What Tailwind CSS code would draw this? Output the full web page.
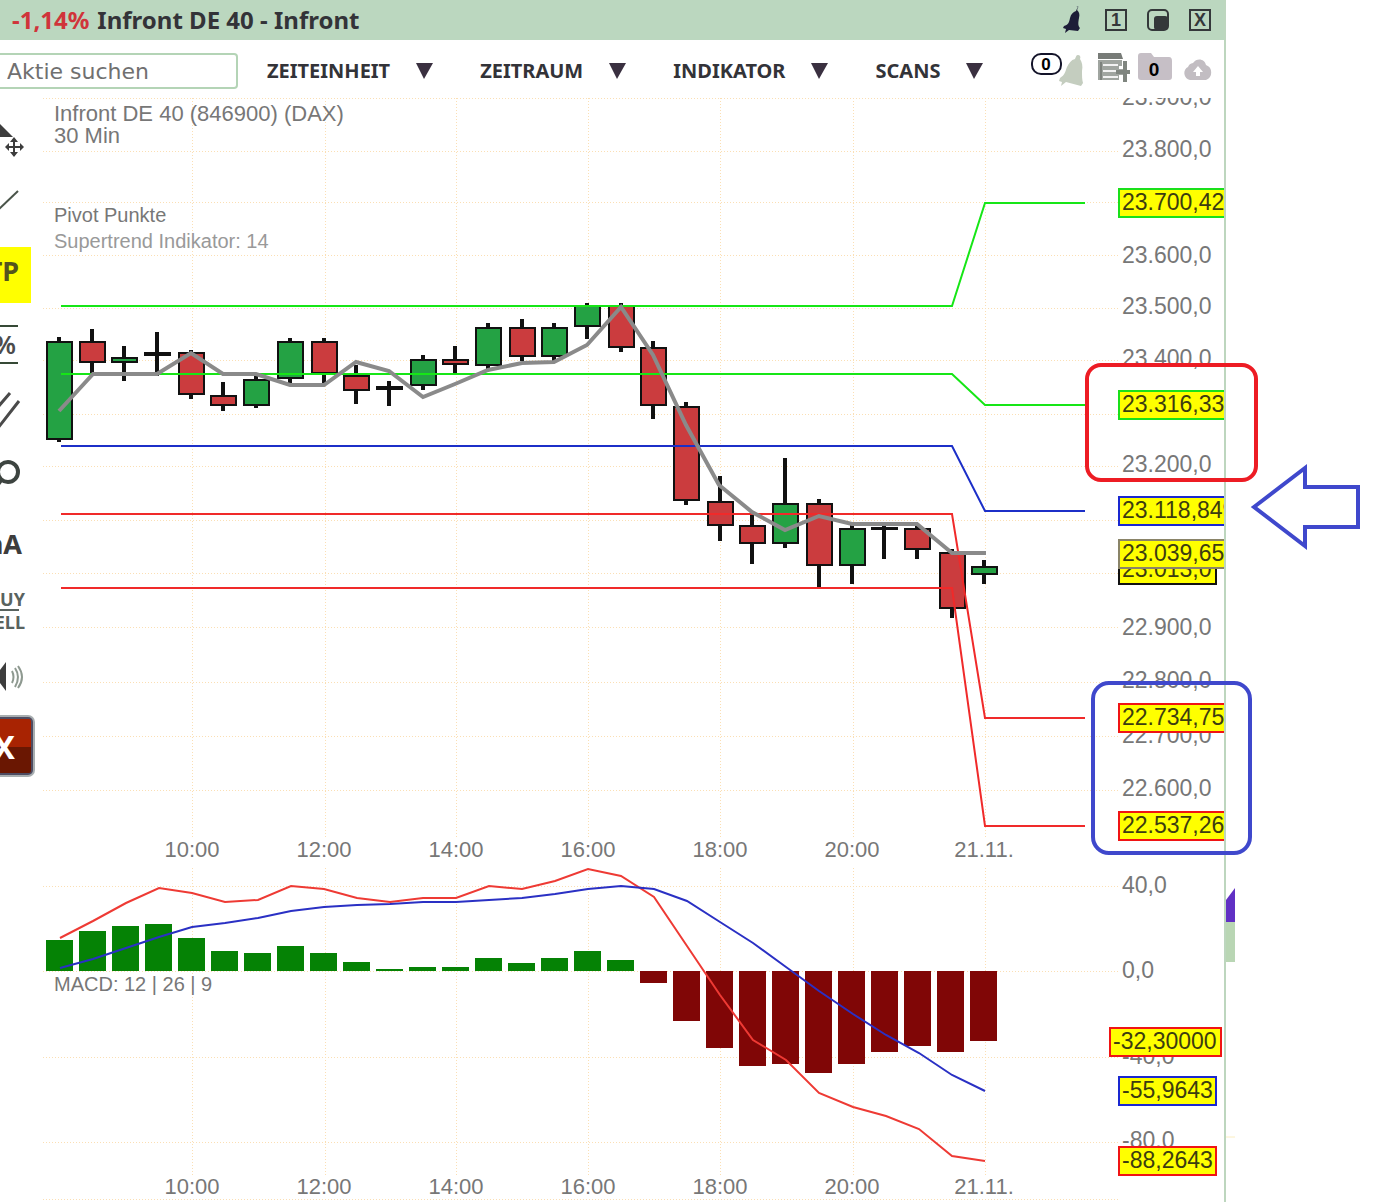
<!DOCTYPE html>
<html lang="de">
<head>
  <meta charset="UTF-8" />
  <meta name="viewport" content="width=device-width, initial-scale=1.0" />
  <title>Infront DE 40 - Infront</title>
  <script src="https://cdn.jsdelivr.net/npm/@tailwindcss/browser@4"></script>
</head>
<body class="bg-white font-['Noto_Sans',sans-serif] text-[#333338]">
  <div class="relative flex overflow-hidden">
    <!-- Chart window -->
    <main class="min-w-0 flex-1 border-r-2 border-[#bdd6be]">
      <!-- Title bar -->
      <header class="flex h-10 items-center bg-[#bbd7bf] pl-3 pr-[13px]">
        <h1 class="flex gap-2 text-2xl font-bold"><span class="text-[#d0343a]">-1,14%</span> Infront DE 40 - Infront</h1>
        <div class="ml-auto flex items-center gap-5 text-[#34383a]">
          <button type="button" aria-label="Alarm">
            <svg class="h-7 w-[22px]" viewBox="0 0 22 28"><path d="M16 1c-2 0-2 2-3 4-3 1-5 3-6 7-1 5-2 7-6 8l-1 2 3 1-1 4 4-3 9 1 2-3c-2-2-2-5-1-10 1-4 0-6-2-8 1-1 1-4-2-4z" fill="#1d1d38" /></svg>
          </button>
          <button type="button" class="size-[22px] border-2 border-[#34383a] font-['Liberation_Sans',sans-serif] text-lg leading-[18px] font-bold">1</button>
          <button type="button" aria-label="Verkleinern">
            <svg class="size-[22px]" viewBox="0 0 22 22"><rect x="1" y="1" width="20" height="20" rx="4" fill="none" stroke="#34383a" stroke-width="2" /><rect x="7" y="7" width="14" height="14" rx="3" fill="#34383a" /></svg>
          </button>
          <button type="button" class="size-[22px] border-2 border-[#34383a] font-['Liberation_Sans',sans-serif] text-lg leading-[18px] font-bold">X</button>
        </div>
      </header>

      <!-- Toolbar -->
      <div class="flex h-[58px] items-center pt-1 pr-[11px]">
        <label for="search" class="sr-only">Aktie suchen</label>
        <input type="search" id="search" placeholder="Aktie suchen"
          class="h-9 w-[238px] rounded-r-sm border-2 border-l-0 border-[#b4d4b6] pl-[7px] font-['DejaVu_Sans',sans-serif] text-[22px] placeholder:text-[#707070]">
        <nav class="ml-[29px] flex gap-[47px] text-xl font-bold">
          <button type="button" class="flex items-center gap-[26px]">ZEITEINHEIT
            <svg class="h-4 w-[17px]" viewBox="0 0 17 16"><path d="M0 0h17L8 16z" fill="#3a3040" /></svg>
          </button>
          <button type="button" class="flex items-center gap-[26px]">ZEITRAUM
            <svg class="h-4 w-[17px]" viewBox="0 0 17 16"><path d="M0 0h17L8 16z" fill="#3a3040" /></svg>
          </button>
          <button type="button" class="flex items-center gap-[26px]">INDIKATOR
            <svg class="h-4 w-[17px]" viewBox="0 0 17 16"><path d="M0 0h17L8 16z" fill="#3a3040" /></svg>
          </button>
          <button type="button" class="flex items-center gap-[26px]">SCANS
            <svg class="h-4 w-[17px]" viewBox="0 0 17 16"><path d="M0 0h17L8 16z" fill="#3a3040" /></svg>
          </button>
        </nav>
        <div class="ml-auto flex items-center gap-2.5 text-black">
          <button type="button" aria-label="Alarme">
            <svg class="h-9 w-[58px]" viewBox="1030 53 58 36" font-family="Liberation Sans, sans-serif">
              <path d="M1078 55c-2 0-2 2-3 4-4 1-6 4-8 8-2 5-2 8-7 11l-1 3 3 1-1 4 5-4 15 4 2-3c-1-3-1-7-1-12 1-5 0-9-2-12 1-2 0-4-2-4z" fill="#c4cdbf" />
              <rect x="1032" y="54" width="29" height="20" rx="9" fill="#fff" stroke="#14142a" stroke-width="2" />
              <text x="1046" y="70" text-anchor="middle" font-size="17" font-weight="bold">0</text>
            </svg>
          </button>
          <button type="button" aria-label="Liste hinzufügen">
            <svg class="h-9 w-[30px] overflow-visible" viewBox="1098 53 30 36">
              <path d="M1098 53h23l2 6h-25z" fill="#777b77" />
              <path d="M1098 60h24v6h-3v3h4v6h-4v5h-21z" fill="#a0a5a0" />
              <path d="M1103 65h15M1103 71h14M1103 77h15" stroke="#f2f2f2" stroke-width="2" />
              <path d="M1101 62v18" stroke="#7d827d" stroke-width="2" />
              <path d="M1125 61v21M1116 72h14" stroke="#7f857f" stroke-width="4" />
            </svg>
          </button>
          <button type="button" aria-label="Ordner">
            <svg class="h-9 w-9" viewBox="1138 53 36 36" font-family="Liberation Sans, sans-serif">
              <path d="M1138 56q0-3 3-3h10l3 4h15q3 0 3 4v16q0 3-3 3h-28q-3 0-3-3z" fill="#c6bfc6" />
              <text x="1154" y="76" text-anchor="middle" font-size="19" font-weight="bold">0</text>
            </svg>
          </button>
          <button type="button" aria-label="Hochladen">
            <svg class="h-9 w-[29px]" viewBox="1184 53 29 36">
              <path d="M1190 80a7 7 0 0 1-2-13 6 6 0 0 1 5-4c4-6 12-4 13 2a8 8 0 0 1 0 15z" fill="#c2bdc2" />
              <path d="M1198 66l5 6h-3v4h-4v-4h-3z" fill="#fff" />
            </svg>
          </button>
        </div>
      </div>

      <div class="flex">
        <!-- Drawing tools, cut off by the window's left edge -->
        <aside class="flex w-[43px] shrink-0 flex-col items-start fill-[#3d3d3d] font-bold">
          <button type="button" aria-label="Verschieben">
            <svg class="h-[72px] w-[43px]" viewBox="0 98 43 72">
              <path d="M0 124l13 13H0z" />
              <path d="M14 139v17M6 147h17" stroke="#3d3d3d" stroke-width="2" />
              <path d="M14 137l4 5h-8zM14 157l4-5h-8zM5 147l4-4v8zM24 147l-4-4v8z" />
            </svg>
          </button>
          <button type="button" aria-label="Linie">
            <svg class="h-[77px] w-[43px]" viewBox="0 170 43 77"><path d="M-2 210l20-19" stroke="#4a544a" stroke-width="2" /></svg>
          </button>
          <button type="button" class="bg-[#ffff00]">
            <svg class="h-14 w-[31px]" viewBox="0 247 31 56"><text x="19" y="281" text-anchor="end" font-size="27" fill="#54541e">TP</text></svg>
          </button>
          <button type="button">
            <svg class="h-[72px] w-[43px]" viewBox="0 303 43 72">
              <path d="M0 326h18M0 363h18" stroke="#364a36" stroke-width="2" />
              <text x="16" y="354" text-anchor="end" font-size="26" font-weight="600" fill="#4c4c4c">%</text>
            </svg>
          </button>
          <button type="button" aria-label="Kanal">
            <svg class="h-[70px] w-[43px]" viewBox="0 375 43 70"><path d="M-2 407l12-14M-2 428l21-27" stroke="#4a4a4a" stroke-width="3" /></svg>
          </button>
          <button type="button" aria-label="Lupe">
            <svg class="h-[65px] w-[43px]" viewBox="0 445 43 65"><circle cx="8" cy="472" r="10" fill="none" stroke="#3d4440" stroke-width="4" /><path d="M2 479l-6 8" stroke="#3d4440" stroke-width="4" /></svg>
          </button>
          <button type="button">
            <svg class="h-[70px] w-[43px]" viewBox="0 510 43 70"><text x="22" y="554" text-anchor="end" font-size="27">aA</text></svg>
          </button>
          <button type="button">
            <svg class="h-[60px] w-[43px]" viewBox="0 580 43 60" fill="#59635f" font-size="18">
              <text x="25" y="606" text-anchor="end">BUY</text>
              <path d="M0 610h19" stroke="#59635f" stroke-width="2" />
              <text x="25" y="629" text-anchor="end">SELL</text>
            </svg>
          </button>
          <button type="button" aria-label="Ton">
            <svg class="h-[70px] w-[43px]" viewBox="0 640 43 70">
              <path d="M0 670l6-8v29l-6-8z" />
              <path d="M12 671q3 6 0 12M15 668q6 9 0 19M18 666q8 11 0 22" fill="none" stroke="#8e9990" stroke-width="2" />
            </svg>
          </button>
          <button type="button">
            <svg class="h-[76px] w-[43px]" viewBox="0 710 43 76">
              <rect x="-12" y="715" width="47" height="62" rx="7" fill="#a8aeb0" />
              <rect x="-12" y="717" width="45" height="58" rx="5" fill="#4e4c62" />
              <path d="M0 719h29q2 0 2 3v25H0z" fill="#a82302" />
              <path d="M0 747h31v23q0 3-2 3H0z" fill="#6a1702" />
              <text x="15" y="759" text-anchor="end" font-size="32" fill="#fff">X</text>
            </svg>
          </button>
        </aside>

        <!-- Chart -->
        <svg id="chart" class="min-w-0 flex-1" viewBox="43 98 1181 1104" font-family="Liberation Sans, sans-serif" fill="none">
          <g id="grid" stroke="#fbdfb4" stroke-dasharray="1 2"></g>
          <g font-size="22" fill="#777">
            <text x="54" y="121">Infront DE 40 (846900) (DAX)</text>
            <text x="54" y="143">30 Min</text>
          </g>
          <g font-size="20" fill="#777">
            <text x="54" y="222">Pivot Punkte</text>
            <text x="54" y="248" fill="#999">Supertrend Indikator: 14</text>
          </g>
          <g id="candles" stroke="#111" stroke-width="3"></g>
          <g stroke-width="2">
            <path d="M61 306H952L985 203H1085M61 374H952L985 405H1085" stroke="#16e616" />
            <path d="M61 446H952L985 511H1085" stroke="#1c2fc8" />
            <path d="M61 514H952L985 718H1085M61 588H952L985 826H1085" stroke="#f02a2a" />
          </g>
          <polyline stroke="#8a8a8a" stroke-width="4" points="59,411 93,374 124,374 157,374 191,353 223,374 256,374 290,385 324,385 356,362 389,371 423,397 455,384 488,370 522,363 554,362 587,345 621,307 653,355 686,425 719,485 752,512 785,530 819,516 852,524 917,524 952,553 986,553" />
          <g id="bars"></g>
          <text x="54" y="991" font-size="20" fill="#777">MACD: 12 | 26 | 9</text>
          <polyline stroke="#ee3a34" stroke-width="2" points="60,938 93,921 126,903 159,888 192,893 225,902 258,900 291,886 324,889 357,898 390,902 423,898 456,898 489,886 522,889 555,881 588,869 621,876 654,897 687,946 720,995 753,1040 786,1060 819,1093 853,1107 886,1116 919,1129 952,1156 985,1161" />
          <polyline stroke="#2a30c4" stroke-width="2" points="60,968 93,959 126,948 159,937 192,927 225,923 258,918 291,911 324,907 357,905 390,904 423,902 456,902 489,900 522,898 555,894 588,889 621,886 654,889 687,901 720,922 753,943 786,967 819,991 853,1014 886,1035 919,1053 952,1075 985,1091" />
          <g id="labels" fill="#777"></g>
          <g id="tags" font-size="23"></g>
        </svg>
      </div>
    </main>

    <div class="w-[162px] shrink-0"></div>

    <!-- Markers drawn over the window -->
    <svg class="pointer-events-none absolute inset-0 w-full" viewBox="0 0 1388 1202" fill="none" stroke-width="4">
      <path d="M1226 900l9-12v34h-9z" fill="#6130c4" />
      <path d="M1226 922h9v40h-9z" fill="#b9d6b4" />
      <path d="M1226 1137h9" stroke="#fbeec0" stroke-width="1" />
      <rect x="1087" y="365" width="169" height="115" rx="14" stroke="#ed1c24" />
      <rect x="1093" y="683" width="157" height="170" rx="16" stroke="#3f48cc" />
      <path d="M1254 507l51-39v19h53v40h-53v19z" stroke="#3f48cc" />
    </svg>
  </div>

  <script>
    const NS = 'http://www.w3.org/2000/svg';

    function add(parent, tag, attrs, text) {
      const el = document.createElementNS(NS, tag);
      for (const key in attrs) el.setAttribute(key, attrs[key]);
      if (text) el.textContent = text;
      document.getElementById(parent).appendChild(el);
    }

    // Grid
    [98, 151, 202, 255, 308, 360, 414, 466, 520, 573, 627, 682, 736, 790, 886, 971, 1057, 1142, 1199].forEach(y => {
      add('grid', 'path', { d: `M43 ${y + 0.5}H1120` });
    });
    [192, 325, 456, 588, 720, 853, 985].forEach(x => {
      add('grid', 'path', { d: `M${x + 0.5} 98V837M${x + 0.5} 868V1175` });
    });

    // x, wick top, body top, body bottom, wick bottom, direction
    const GREEN = '#24a244', RED = '#cb3c3e', FLAT = '#111';
    [
      [59, 337, 341, 440, 442, GREEN], [92, 329, 341, 363, 375, RED], [124, 346, 357, 363, 381, GREEN],
      [157, 332, 352, 356, 376, FLAT], [191, 350, 352, 395, 399, RED], [223, 382, 395, 406, 411, RED],
      [256, 375, 379, 406, 408, GREEN], [290, 338, 341, 379, 384, GREEN], [324, 338, 341, 374, 384, RED],
      [356, 365, 375, 391, 404, RED], [389, 381, 386, 390, 406, FLAT], [423, 355, 359, 386, 390, GREEN],
      [455, 346, 359, 365, 373, RED], [488, 323, 327, 366, 369, GREEN], [522, 319, 327, 357, 361, RED],
      [554, 323, 327, 357, 361, GREEN], [587, 303, 305, 327, 339, GREEN], [621, 303, 305, 348, 352, RED],
      [653, 341, 347, 406, 419, RED], [686, 402, 406, 501, 505, RED], [720, 476, 501, 526, 541, RED],
      [752, 512, 525, 544, 564, RED], [785, 458, 503, 544, 548, GREEN], [819, 499, 503, 566, 587, RED],
      [852, 525, 528, 566, 584, GREEN], [884, 524, 527, 530, 559, FLAT], [917, 526, 528, 550, 559, RED],
      [952, 549, 552, 609, 618, RED], [984, 560, 566, 575, 584, GREEN],
    ].forEach(([x, high, top, bottom, low, fill]) => {
      add('candles', 'path', { d: `M${x} ${high}V${low}`, 'stroke-width': 4 });
      add('candles', 'rect', { x: x - 12, y: top + 1, width: 25, height: Math.max(bottom - top - 2, 1), fill, 'stroke-width': 2 });
    });

    // MACD histogram around the zero line
    [940, 931, 926, 924, 938, 951, 953, 946, 953, 962, 969, 967, 967, 958, 963, 958, 951, 960,
      983, 1021, 1048, 1066, 1064, 1073, 1064, 1052, 1046, 1052, 1041].forEach((y, i) => {
      const up = y < 971;
      add('bars', 'rect', { x: 46 + i * 33, y: up ? y : 971, width: 27, height: Math.abs(y - 971), fill: up ? '#058205' : '#800606' });
    });

    // Axis labels
    [
      ['23.900,0', 105], ['23.800,0', 157], ['23.600,0', 263], ['23.500,0', 314], ['23.400,0', 366],
      ['23.200,0', 472], ['22.900,0', 635], ['22.800,0', 688], ['22.700,0', 743], ['22.600,0', 796],
      ['40,0', 893], ['0,0', 978], ['-40,0', 1064], ['-80,0', 1148],
    ].forEach(([label, y]) => add('labels', 'text', { x: 1122, y, 'font-size': 23 }, label));
    ['10:00', '12:00', '14:00', '16:00', '18:00', '20:00', '21.11.'].forEach((label, i) => {
      [857, 1194].forEach(y => add('labels', 'text', { x: 192 + i * 132, y, 'font-size': 22, 'text-anchor': 'middle' }, label));
    });

    // Price tags: label, left, top, width, border
    [
      ['23.700,42', 1118, 188, 120, '#1ae01a'], ['23.316,33', 1118, 390, 120, '#1ae01a'],
      ['23.118,849', 1118, 496, 130, '#1a28d0'], ['23.013,0', 1118, 555, 99, '#111'],
      ['23.039,65', 1118, 539, 120, '#8a8468'], ['22.734,75', 1118, 703, 120, '#f01414'],
      ['22.537,26', 1118, 811, 120, '#f01414'], ['-32,30000', 1109, 1027, 113, '#f01414'],
      ['-55,9643', 1118, 1076, 99, '#1a28d0'], ['-88,2643', 1118, 1146, 99, '#f01414'],
    ].forEach(([label, x, y, width, stroke]) => {
      add('tags', 'rect', { x: x + 1, y: y + 1, width: width - 2, height: 28, fill: '#ffff00', stroke, 'stroke-width': 2 });
      add('tags', 'text', { x: x + 4, y: y + 22, fill: '#3c3c10' }, label);
    });
  </script>
</body>
</html>
